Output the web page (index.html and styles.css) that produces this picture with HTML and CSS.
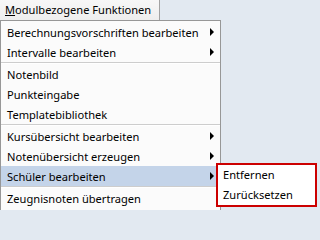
FILE: index.html
```html
<!DOCTYPE html>
<html lang="de">
<head>
<meta charset="utf-8">
<title>Menü</title>
<link rel="stylesheet" href="styles.css">
</head>
<body>
<div class="screen">
  <div class="menubar">
    <div class="top-item"><span class="ak">M</span>odulbezogene Funktionen</div>
  </div>
  <div class="dropdown">
    <div class="item"><span>Berechnungsvorschriften bearbeiten</span><span class="arrow"></span></div>
    <div class="item"><span>Intervalle bearbeiten</span><span class="arrow"></span></div>
    <div class="sep"></div>
    <div class="item"><span>Notenbild</span></div>
    <div class="item"><span>Punkteingabe</span></div>
    <div class="item"><span>Templatebibliothek</span></div>
    <div class="sep"></div>
    <div class="item"><span>Kursübersicht bearbeiten</span><span class="arrow"></span></div>
    <div class="item"><span>Notenübersicht erzeugen</span><span class="arrow"></span></div>
    <div class="item active"><span>Schüler bearbeiten</span><span class="arrow"></span></div>
    <div class="sep"></div>
    <div class="item"><span>Zeugnisnoten übertragen</span></div>
  </div>
  <div class="submenu">
    <div class="sub-item">Entfernen</div>
    <div class="sub-item">Zurücksetzen</div>
  </div>
  <div class="annot"></div>
</div>
</body>
</html>
```
FILE: styles.css
```css
html {
  margin: 0;
  padding: 0;
  background: #e2e9f1;
}
body {
  margin: 0;
  padding: 0;
  background: #e2e9f1;
  font-family: "Noto Sans", "DejaVu Sans", sans-serif;
  font-size: 11.1px;
  color: #000;
  width: 317px;
  height: 210px;
  overflow: hidden;
}
.screen {
  position: relative;
  width: 317px;
  height: 210px;
}
.menubar {
  display: flex;
  height: 20px;
}
.top-item {
  box-sizing: border-box;
  width: 160px;
  height: 20px;
  padding-left: 5px;
  line-height: 19px;
  background: linear-gradient(#f7f7f7, #eeeeee);
  border-right: 1px solid #a2a2a2;
  white-space: nowrap;
}
.ak {
  text-decoration: underline;
}
.dropdown {
  box-sizing: border-box;
  width: 221px;
  border: 1px solid #979797;
  background: #fbfbfb;
  padding-top: 1px;
  padding-bottom: 2px;
  display: flex;
  flex-direction: column;
}
.item {
  height: 20px;
  display: flex;
  align-items: center;
  justify-content: space-between;
  padding-left: 6px;
  padding-right: 6px;
  white-space: nowrap;
}
.item.active {
  background: #c4d4e9;
}
.arrow {
  width: 0;
  height: 0;
  border-left: 4px solid #000;
  border-top: 4px solid transparent;
  border-bottom: 4px solid transparent;
}
.sep {
  height: 1px;
  background: #cdcdcd;
  border-bottom: 1px solid #ffffff;
}
.submenu {
  position: absolute;
  left: 217px;
  top: 164px;
  width: 99px;
  padding-top: 1px;
  background: #ffffff;
  display: flex;
  flex-direction: column;
}
.sub-item {
  height: 20px;
  line-height: 20px;
  padding-left: 6px;
  white-space: nowrap;
}
.annot {
  position: absolute;
  box-sizing: border-box;
  left: 216px;
  top: 163px;
  width: 101px;
  height: 44px;
  border: 2px solid #cc0000;
}
```
